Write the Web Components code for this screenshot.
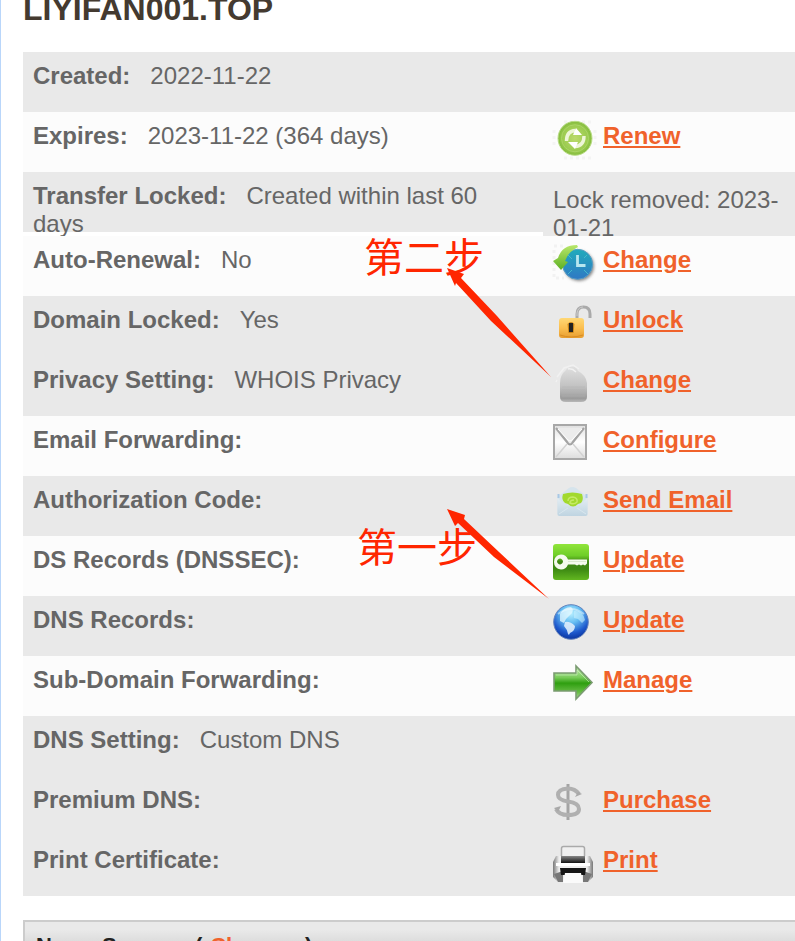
<!DOCTYPE html>
<html lang="en">
<head>
<meta charset="utf-8">
<title>Domain details</title>
<style>
html, body { margin: 0; background: #fff; }
body { font: 24px/28px "Liberation Sans", Arial, "Noto Sans CJK SC", sans-serif; color: #666; overflow: hidden; height: 100vh; }
</style>
</head>
<body>
<domain-page></domain-page>
<script>
const ICONS = {
  renew: `<defs><radialGradient id="a"><stop offset="0" stop-color="#bcdb6c"/><stop offset=".75" stop-color="#9bcb50"/><stop offset="1" stop-color="#83bb3c"/></radialGradient></defs>
    <path d="M1 10v18M38 2H10M42 10v18M38 38H10" stroke="#f4f4f4" stroke-width="3" stroke-dasharray="3 3"/>
    <circle cx="22" cy="18.3" r="17" fill="url(#a)" stroke="#b9dc86"/>
    <circle cx="22" cy="18.3" r="13.5" fill="none" stroke="#abd566"/>
    <path d="M13.500 21q0-10 9-10.500M31 16q0 10-9 10.500" fill="none" stroke="#eef6d8" stroke-width="3.400"/>
    <path d="M20 15l3-7 6 7zM15 22h10l-3 7z" fill="#fff"/>`,
  clock: `<defs><linearGradient id="a" x2="0" y2="1"><stop stop-color="#20abbb"/><stop offset="1" stop-color="#3078c4"/></linearGradient><linearGradient id="b" x2="0" y2="1"><stop stop-color="#b9e76c"/><stop offset="1" stop-color="#5cb022"/></linearGradient><filter id="f"><feGaussianBlur stdDeviation="1.5"/></filter></defs>
    <path d="M1 2h12M1 6v28h10" fill="none" stroke="#f2f2f2" stroke-width="3" stroke-dasharray="3 3"/>
    <circle cx="26" cy="22" r="15" fill="#888" filter="url(#f)"/>
    <circle cx="24.6" cy="20.3" r="15" fill="url(#a)" stroke="#5a9dc3"/>
    <path d="M15 11l4 4M34 11l-3 3M15 30l4-4M35 30l-4-4" stroke="#47b9cb" stroke-width="1"/>
    <path d="M24.500 11v10.500h8" fill="none" stroke="#b7e6ef" stroke-width="2.800"/>
    <path d="M24 1Q9 1 5 14l-5 3 8 9 7-8-3-1Q15 8 25 3z" fill="url(#b)"/>`,
  unlock: `<defs><linearGradient id="a" x2="0" y2="1"><stop stop-color="#ffd875"/><stop offset=".5" stop-color="#fbbf50"/><stop offset="1" stop-color="#e79d30"/></linearGradient></defs>
    <path d="M24 14V10Q24 3 30.500 3T37 10v4" fill="none" stroke="#aaa" stroke-width="3"/>
    <path d="M24 12V9Q25 3 30 3" fill="none" stroke="#ccc" stroke-width="1"/>
    <rect x="6" y="14" width="25" height="20" rx="3" fill="url(#a)"/>
    <path d="M7 31q11 4 23 0" fill="none" stroke="#d98c21"/>
    <path d="M14.500 20q3.500-4 7 0l-1 9h-5z" fill="#c88417"/><path d="M16 19h4v9h-4z" fill="#222"/>`,
  privacy: `<defs><linearGradient id="a" x2="0" y2="1"><stop stop-color="#e0e0e0"/><stop offset=".55" stop-color="#c3c3c3"/><stop offset=".9" stop-color="#9b9b9b"/><stop offset="1" stop-color="#b8b8b8"/></linearGradient></defs>
    <path d="M13 6q3-5 9-3 2 1 3 4 8 4 9 12v14q0 5-6 5H13q-6 0-6-5V19q0-8 6-13z" fill="url(#a)"/>
    <path d="M4 13L11 4l9-3 6 4M4 16l-1 2M15 5q4-1 8 3" fill="none" stroke="#f1f1f1" stroke-width="1.500"/>
    <path d="M9 23h23M9 26h23M9 29h23M9 32h23" stroke="#b0b0b0" stroke-width=".5"/>`,
  envelope: `<defs><linearGradient id="a" x2="0" y2="1"><stop stop-color="#e0e0e0"/><stop offset=".5" stop-color="#fff"/><stop offset="1" stop-color="#dcdcdc"/></linearGradient></defs>
    <rect x="1" y="1" width="32" height="34" fill="url(#a)" stroke="#a8a8a8" stroke-width="2"/>
    <path d="M3 33l11-13M31 33L20 20" stroke="#d2d2d2" stroke-width="1.500"/>
    <path d="M3 4l11 14q3 4 6 0L31 4z" fill="#ececec"/>
    <path d="M3 4l11 14q3 5 6 0L31 4" fill="none" stroke="#a4a4a4" stroke-width="2.200"/>
    <path d="M5 5l10 11q2 2 4 0L29 5" fill="none" stroke="#fff"/>`,
  send: `<defs><linearGradient id="a" x2="0" y2="1"><stop stop-color="#e3edf3"/><stop offset="1" stop-color="#bfd4e1"/></linearGradient></defs>
    <path d="M4.500 13L16 4q3-2 7 0l11.500 9v17q0 2-2 2h-26q-2 0-2-2z" fill="#d6e4ec"/>
    <path d="M5.500 10v4M33.500 10v4" stroke="#a8c8e5" stroke-width="2"/>
    <path d="M4.500 14l9 8h12l9-8v16q0 2-2 2h-26q-2 0-2-2z" fill="url(#a)"/>
    <path d="M10 10q9.500-3 19 0 2 6-1 9l-3 1q-5 5-10 0l-3-1q-4-3-2-9z" fill="#a2d92e"/>
    <path d="M15 17q0-4 5-4 5 1 4 5-3 3-7 1 0-3 4-3" fill="none" stroke="#c5ea66" stroke-width="1.500"/>
    <path d="M6 30l9-6M33 30l-9-6" stroke="#d9e7ef"/>`,
  key: `<defs><linearGradient id="a" x2="0" y2="1"><stop stop-color="#91e53b"/><stop offset=".32" stop-color="#6fce28"/><stop offset=".5" stop-color="#3f8615"/><stop offset=".7" stop-color="#3d8913"/><stop offset="1" stop-color="#62b720"/></linearGradient></defs>
    <rect width="36" height="36" rx="3" fill="url(#a)"/>
    <path fill-rule="evenodd" d="M8 10.500q5 0 7 5h19v4l-2 2-2-1-2 1-2-1-2 1-2-1h-7q-2 5-7 5-7-1-7-7.500t7-7.500zM5 15.500q-2 2 0 4t4 0 0-4-4 0z" fill="#f5faee"/>
    <path d="M15 17.500h18" stroke="#dbe8cf"/>`,
  globe: `<defs><radialGradient id="a" cx=".5" cy=".25" r=".8"><stop stop-color="#baf0ff"/><stop offset=".35" stop-color="#64bdf2"/><stop offset=".7" stop-color="#1e59cd"/><stop offset="1" stop-color="#062b93"/></radialGradient></defs>
    <circle cx="18" cy="18" r="17.300" fill="url(#a)" stroke="#6482ba"/>
    <path d="M7 10q4-7 11-7 3 2 1 6l-6 6-2 4-4-2z" fill="#e5f8ff" opacity=".75"/>
    <path d="M12 18q5-1 10 4 0 5-5 7-1 3-2 1-1-5-4-8z" fill="#deedfc" opacity=".9"/>
    <path d="M21 7q9-1 11 9l-3 3-4-4-4-1z" fill="#c9f1ff" opacity=".6"/>
    <path d="M5 10q13-10 26 0" fill="none" stroke="#effcff" stroke-width="2" opacity=".5"/>`,
  arrow: `<defs><linearGradient id="a" x2="0" y2="1"><stop stop-color="#c8eeb7"/><stop offset=".35" stop-color="#77cb58"/><stop offset=".52" stop-color="#2f9f10"/><stop offset=".8" stop-color="#68bd46"/><stop offset="1" stop-color="#acd997"/></linearGradient></defs>
    <path d="M1 9h22V2l16 16.500L23 35v-8H1z" fill="url(#a)" stroke="#7b9b72" stroke-width="1.600"/>
    <path d="M3 11h21V6l12 12" fill="none" stroke="#cfedc3" opacity=".6"/>`,
  dollar: `<path d="M15 0v36" stroke="#a4a4a4" stroke-width="3"/>
    <path d="M26 10Q22 4.500 15 4.500 5 5 5 11q0 5 10 6.500 11 1.500 11 7.500 0 6-11 6-9 0-12-6" fill="none" stroke="#b0b0b0" stroke-width="4"/>
    <path d="M29 10l-7 3 3-5zM1 24l7-2-3 6z" fill="#a9a9a9"/>`,
  printer: `<defs><linearGradient id="a" x2="1"><stop stop-color="#777"/><stop offset=".15" stop-color="#eee"/><stop offset=".85" stop-color="#eee"/><stop offset="1" stop-color="#777"/></linearGradient><linearGradient id="b" x2="0" y2="1"><stop stop-color="#888"/><stop offset="1" stop-color="#111"/></linearGradient></defs>
    <rect x="8.500" y="2.500" width="23" height="14" rx="2" fill="#f0f0f0" stroke="#aaa" stroke-width="1.500"/>
    <path d="M3 12h34l3 6v15l-5 5H5l-5-5V18z" fill="url(#a)"/>
    <path d="M1 30l4 8h5V27zM39 30l-4 8h-5V27z" fill="#777"/>
    <path d="M8 12h24v7H8z" fill="url(#b)"/><path d="M3 20.500h34" stroke="#fff" stroke-width="3"/>
    <path d="M7 24h26l-1 7H8z" fill="#151515"/><path d="M12 29h16l2 10H10z" fill="#fafafa"/>`
};

class StatusIcon extends HTMLElement {
  connectedCallback() {
    const root = this.attachShadow({ mode: "open" });
    root.innerHTML = `<style>:host{display:block;width:40px;height:40px}svg{display:block;overflow:visible;filter:blur(.5px)}</style>
      <svg width="40" height="40" viewBox="0 0 40 40" aria-hidden="true">${ICONS[this.getAttribute("name")] || ""}</svg>`;
  }
}
customElements.define("status-icon", StatusIcon);

class ActionLink extends HTMLElement {
  connectedCallback() {
    const root = this.attachShadow({ mode: "open" });
    root.innerHTML = `<style>
      :host{display:grid;grid-template-columns:50px 1fr;align-items:start;padding-top:8px}
      a{justify-self:start;margin-top:2px;color:#f0622b;font-weight:bold;text-decoration:underline}
      </style><status-icon name="${this.getAttribute("icon")}"></status-icon><a href="#"><slot></slot></a>`;
  }
}
customElements.define("action-link", ActionLink);

class DomainRow extends HTMLElement {
  connectedCallback() {
    const root = this.attachShadow({ mode: "open" });
    root.innerHTML = `<style>
      :host{display:grid;grid-template-columns:minmax(0,1fr) 252px;height:60px;overflow:hidden;--shade:#e9e9e9}
      :host([light]){--shade:#fcfcfc}
      :host([tall]){height:64px}
      .info{box-sizing:border-box;height:60px;padding:10px 10px 0;background:var(--shade)}
      .label{font-weight:bold;margin-right:20px}
      .action{padding:0 10px;background:var(--shade)}
      ::slotted(p){margin:0;padding-top:14px}
      </style>
      <div class="info"><span class="label">${this.getAttribute("label")}:</span><slot name="value"></slot></div>
      <div class="action"><slot></slot></div>`;
  }
}
customElements.define("domain-row", DomainRow);

class StepNote extends HTMLElement {
  connectedCallback() {
    const root = this.attachShadow({ mode: "open" });
    root.innerHTML = `<style>
      :host{position:absolute;pointer-events:none;color:#ff2600;font:40px/40px "Noto Sans CJK SC",sans-serif}
      svg{position:absolute;overflow:visible}
      :host([step="2"]){left:364px;top:235px}
      :host([step="1"]){left:357px;top:525px}
      :host([step="2"]) svg{left:83px;top:33px}
      :host([step="1"]) svg{left:90px;top:-16px}
      span{white-space:nowrap}
      </style><span><slot></slot></span>
      <svg width="104" height="110" aria-hidden="true"><path fill="#ff2600" d="${this.getAttribute("step") === "2"
        ? "M0 0L17 6L14 10L50 48L104 109L44 53L9 15L8 18Z"
        : "M0 0L18 6L17 10L52 43L102 90L47 48L11 14L8 17Z"}"/></svg>`;
  }
}
customElements.define("step-note", StepNote);

class NameServers extends HTMLElement {
  connectedCallback() {
    const root = this.attachShadow({ mode: "open" });
    root.innerHTML = `<style>
      :host{display:block;margin-top:24px;border:2px solid #ccc;border-right:0;background:linear-gradient(#e9e9e9 8px,#dcdcdc 20px,#d0d0d0)}
      h2{margin:0;padding:11px;font-size:22px;line-height:26px;color:#222}
      .open{margin-left:6px}
      a{margin:0 8px;color:#f0622b;text-decoration:underline}
      </style><h2>Name Servers <span class="open">(</span><a href="#">Change</a> )</h2>`;
  }
}
customElements.define("name-servers", NameServers);

class DomainPage extends HTMLElement {
  connectedCallback() {
    const root = this.attachShadow({ mode: "open" });
    root.innerHTML = `<style>
      :host{display:block;position:relative;box-sizing:border-box;min-height:100vh;padding-left:22px;border-left:1px solid #b9d6fa}
      main{display:flow-root}
      h1{margin:-9px 0 25px;font-size:32px;line-height:36px;color:#443a30}
      .notes{position:absolute;top:0;left:-1px}
      </style>
      <main>
      <h1>LIYIFAN001.TOP</h1>
      <section>
        <domain-row label="Created"><span slot="value">2022-11-22</span></domain-row>
        <domain-row light label="Expires"><span slot="value">2023-11-22 (364 days)</span><action-link icon="renew">Renew</action-link></domain-row>
        <domain-row tall label="Transfer Locked"><span slot="value">Created within last 60 days</span><p>Lock removed: 2023-01-21</p></domain-row>
        <domain-row light label="Auto-Renewal"><span slot="value">No</span><action-link icon="clock">Change</action-link></domain-row>
        <domain-row label="Domain Locked"><span slot="value">Yes</span><action-link icon="unlock">Unlock</action-link></domain-row>
        <domain-row label="Privacy Setting"><span slot="value">WHOIS Privacy</span><action-link icon="privacy">Change</action-link></domain-row>
        <domain-row light label="Email Forwarding"><action-link icon="envelope">Configure</action-link></domain-row>
        <domain-row label="Authorization Code"><action-link icon="send">Send Email</action-link></domain-row>
        <domain-row light label="DS Records (DNSSEC)"><action-link icon="key">Update</action-link></domain-row>
        <domain-row label="DNS Records"><action-link icon="globe">Update</action-link></domain-row>
        <domain-row light label="Sub-Domain Forwarding"><action-link icon="arrow">Manage</action-link></domain-row>
        <domain-row label="DNS Setting"><span slot="value">Custom DNS</span></domain-row>
        <domain-row label="Premium DNS"><action-link icon="dollar">Purchase</action-link></domain-row>
        <domain-row label="Print Certificate"><action-link icon="printer">Print</action-link></domain-row>
      </section>
      <name-servers></name-servers>
      </main>
      <div class="notes" lang="zh-CN"><step-note step="2">第二步</step-note><step-note step="1">第一步</step-note></div>`;
  }
}
customElements.define("domain-page", DomainPage);
</script>
</body>
</html>
